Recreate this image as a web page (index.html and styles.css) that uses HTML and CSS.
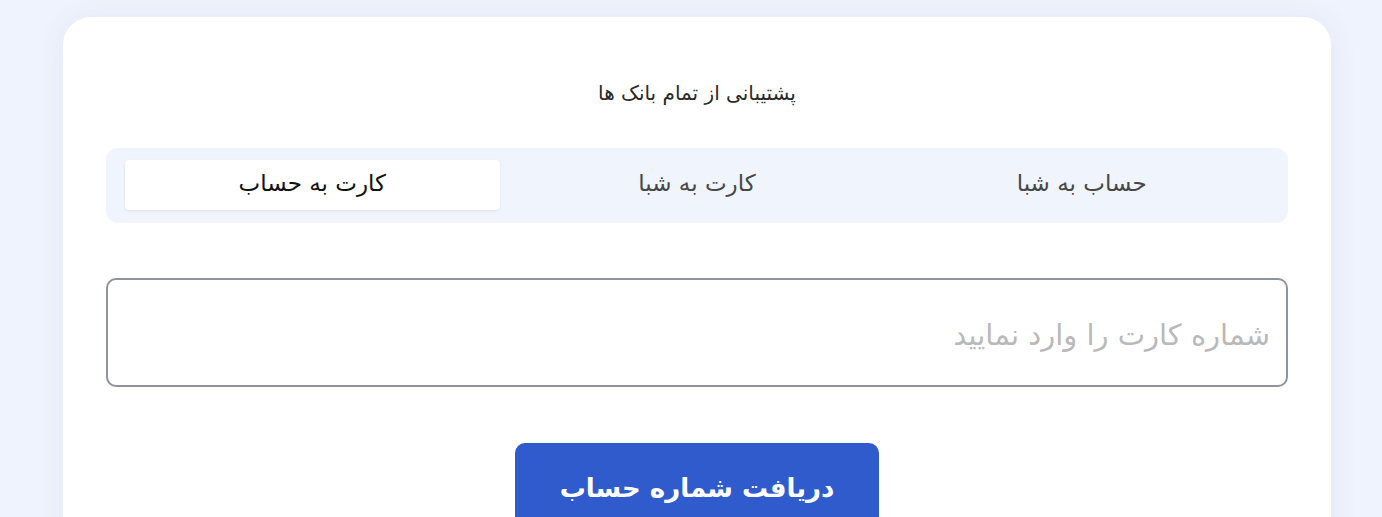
FILE: index.html
```html
<!DOCTYPE html>
<html lang="fa" dir="rtl">
<head>
    <meta charset="UTF-8">
    <meta name="viewport" content="width=device-width, initial-scale=1.0">
    <title>تبدیل شماره کارت</title>
    <link rel="stylesheet" href="styles.css">
</head>
<body>
    <div class="card">
        <p class="subtitle">پشتیبانی از تمام بانک ها</p>
        <div class="tabs">
            <button class="tab">حساب به شبا</button>
            <button class="tab">کارت به شبا</button>
            <button class="tab active">کارت به حساب</button>
        </div>
        <input type="text" class="card-input" placeholder="شماره کارت را وارد نمایید">
        <div class="actions">
            <button class="btn-submit">دریافت شماره حساب</button>
        </div>
    </div>
</body>
</html>
```

FILE: styles.css
```css
body {
    margin: 0;
    padding: 17px 51px 0 63px;
    font-family: "DejaVu Sans", "Noto Sans", sans-serif;
    background-color: #eff3fd;
    color: #222;
    overflow: hidden;
}
.card {
    background: #fff;
    border-radius: 28px;
    box-shadow: 0 0 30px rgba(60, 80, 160, 0.07);
    padding: 62px 43px 60px;
}
.subtitle {
    margin: 0 0 41px;
    text-align: center;
    font-size: 20px;
    line-height: 28px;
    color: #2a2a2a;
}
.tabs {
    display: flex;
    gap: 10px;
    padding: 12px 19px 13px;
    background-color: #f0f4fd;
    border-radius: 12px;
}
.tab {
    flex: 1;
    height: 50px;
    padding: 0 0 5px;
    border: none;
    border-radius: 4px;
    background: transparent;
    font-family: inherit;
    font-size: 23px;
    color: #474747;
    cursor: pointer;
}
.tab.active {
    background: #fff;
    color: #111;
    box-shadow: 0 1px 3px rgba(0, 0, 0, 0.08);
}
.card-input {
    display: block;
    width: 100%;
    box-sizing: border-box;
    height: 109px;
    margin-top: 55px;
    padding: 5px 16px 0;
    border: 2px solid #8e949e;
    border-radius: 10px;
    font-family: inherit;
    font-size: 29px;
    color: #222;
    outline: none;
}
.card-input::placeholder {
    color: #b9b9b9;
}
.actions {
    display: flex;
    justify-content: center;
    margin-top: 56px;
}
.btn-submit {
    width: 364px;
    height: 90px;
    border: none;
    border-radius: 10px;
    background-color: #2f5bcc;
    color: #fff;
    font-family: inherit;
    font-size: 26px;
    font-weight: bold;
    cursor: pointer;
}
```
